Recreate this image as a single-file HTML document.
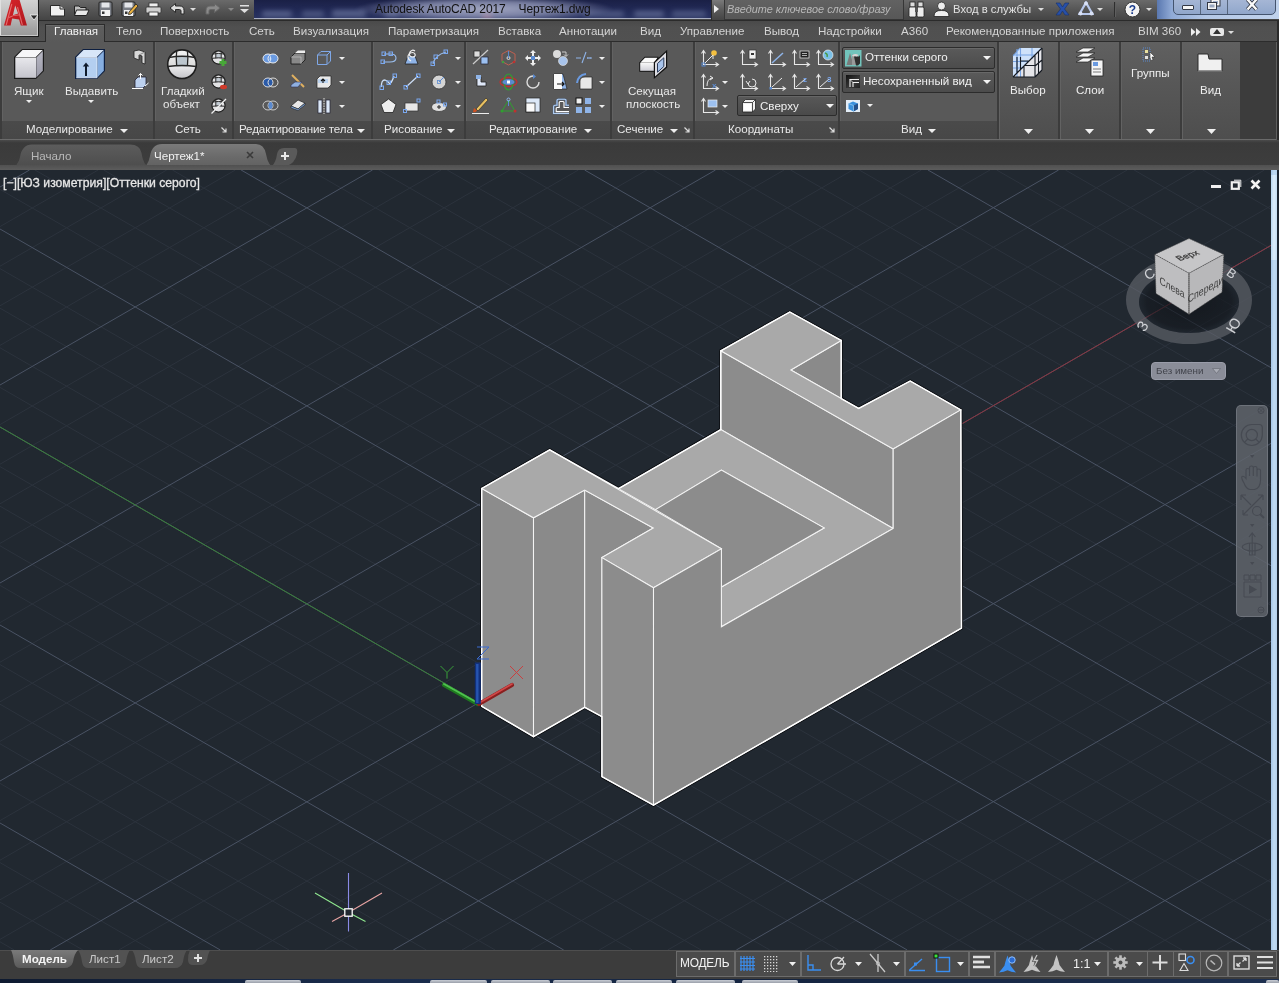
<!DOCTYPE html><html><head><meta charset="utf-8"><style>
*{margin:0;padding:0;box-sizing:border-box}
body{width:1279px;height:983px;overflow:hidden;position:relative;background:#3b3b3b;font-family:"Liberation Sans", sans-serif;font-size:12px;color:#ddd}
.a{position:absolute}
svg{will-change:transform}
.t{position:absolute;white-space:nowrap;line-height:1;will-change:transform}
</style></head><body>
<div class="a" style="left:0;top:0;width:1279px;height:21px;background:linear-gradient(#6a6a6a,#555 50%,#444);border-bottom:1px solid #2b2b2b"></div>
<div class="a" style="left:254px;top:0;width:457px;height:19px;background:linear-gradient(#1a2046,#232b58 60%,#2a3462);overflow:hidden">
<div class="a" style="left:0;top:9px;width:457px;height:10px;filter:blur(2.5px)">
<div class="a" style="left:8px;top:2px;width:30px;height:6px;background:#56608a;border-radius:3px"></div>
<div class="a" style="left:48px;top:2px;width:22px;height:6px;background:#4c5680;border-radius:3px"></div>
<div class="a" style="left:78px;top:1px;width:34px;height:7px;background:#56608a;border-radius:3px"></div>
<div class="a" style="left:130px;top:2px;width:14px;height:6px;background:#505a84;border-radius:3px"></div>
<div class="a" style="left:330px;top:2px;width:40px;height:6px;background:#4e5882;border-radius:3px"></div>
<div class="a" style="left:380px;top:2px;width:30px;height:6px;background:#56608a;border-radius:3px"></div>
<div class="a" style="left:418px;top:2px;width:34px;height:6px;background:#4c5680;border-radius:3px"></div>
<div class="a" style="left:228px;top:3px;width:10px;height:6px;background:#b05060;border-radius:3px"></div>
</div>
<div class="a" style="left:100px;top:-4px;width:260px;height:26px;background:radial-gradient(ellipse 50% 50% at center,rgba(175,180,205,.9) 0%,rgba(150,156,188,.75) 55%,rgba(110,118,165,0) 100%);filter:blur(1px)"></div>
<div class="a" style="left:0;top:17.5px;width:457px;height:1.5px;background:#c0c4d2;opacity:.85"></div>
</div>
<div class="t" style="left:375px;top:3px;font-size:12px;color:#101010;letter-spacing:-0.1px">Autodesk AutoCAD 2017&nbsp;&nbsp;&nbsp;&nbsp;Чертеж1.dwg</div>
<svg class="a" style="left:49px;top:4px" width="17" height="13"><path d="M1.5 1.5 H11 L15.5 5 V12 H1.5 Z" fill="#f0f0f0" stroke="#2a2a2a" stroke-width="1"/><path d="M11 1.5 V5 H15.5" fill="#d8d8d8" stroke="#2a2a2a" stroke-width="1"/></svg>
<svg class="a" style="left:73px;top:4px" width="17" height="13"><path d="M1.5 2 H6 L7.5 3.5 H13 V11.5 H1.5 Z" fill="#bfbfbf" stroke="#222" stroke-width="1"/><path d="M3.5 6 H16 L13.5 11.5 H1.5 Z" fill="#e8e8e8" stroke="#222" stroke-width="1"/></svg>
<svg class="a" style="left:98px;top:1px" width="15" height="16"><rect x="1" y="1" width="13" height="14" rx="1" fill="#7a7e86" stroke="#222"/><rect x="3.5" y="1.5" width="8" height="5" fill="#e4e6ea"/><rect x="3" y="9" width="9" height="6" fill="#f2f2f2"/><rect x="4" y="10.5" width="2.5" height="2.5" fill="#333"/></svg>
<svg class="a" style="left:121px;top:1px" width="18" height="16"><rect x="1" y="1" width="13" height="14" rx="1" fill="#7a7e86" stroke="#222"/><rect x="3.5" y="1.5" width="8" height="5" fill="#e4e6ea"/><rect x="3" y="9" width="9" height="6" fill="#f2f2f2"/><rect x="4" y="10.5" width="2.5" height="2.5" fill="#333"/><path d="M8 11 L15 3 L17 5 L10 13 L7.5 13.5 Z" fill="#e8b040" stroke="#222" stroke-width=".8"/></svg>
<svg class="a" style="left:145px;top:2px" width="17" height="15"><rect x="4" y="1" width="9" height="4" fill="#eee" stroke="#333" stroke-width=".8"/><rect x="1" y="5" width="15" height="6" rx="1" fill="#d0d0d0" stroke="#333" stroke-width=".8"/><rect x="4" y="10" width="9" height="4" fill="#f4f4f4" stroke="#333" stroke-width=".8"/></svg>
<svg class="a" style="left:169px;top:2px" width="16" height="13"><path d="M1 6 L6.5 1.5 V4 H11 Q15 4 15 8.5 V12 H12 V9 Q12 7.5 10.5 7.5 H6.5 V10.5 Z" fill="#dcdcdc" stroke="#2a2a2a" stroke-width="1"/></svg>
<svg class="a" style="left:190px;top:8px" width="6" height="3"><polygon points="0,0 6,0 3.0,3" fill="#dcdcdc"/></svg>
<svg class="a" style="left:205px;top:2px" width="16" height="13"><path d="M15 6 L9.5 1.5 V4 H5 Q1 4 1 8.5 V12 H4 V9 Q4 7.5 5.5 7.5 H9.5 V10.5 Z" fill="#8a8a8a" stroke="#666" stroke-width="1"/></svg>
<svg class="a" style="left:228px;top:8px" width="6" height="3"><polygon points="0,0 6,0 3.0,3" fill="#8a8a8a"/></svg>
<svg class="a" style="left:240px;top:4px" width="10" height="10"><rect x="0" y="1" width="9" height="1.5" fill="#e0e0e0"/><polygon points="0,5 9,5 4.5,9" fill="#e0e0e0"/></svg>
<div class="a" style="left:711px;top:0;width:13px;height:20px;background:linear-gradient(#7a7a7a,#5a5a5a 50%,#444);border-left:1px solid #2a2a2a"></div>
<svg class="a" style="left:714px;top:5px" width="5" height="8"><polygon points="0,0 5,4 0,8" fill="#eee"/></svg>
<div class="a" style="left:724px;top:0;width:180px;height:20px;background:linear-gradient(#626262,#575757);border:1px solid #363636;border-top:none"></div>
<div class="t" style="left:727px;top:3.5px;font-size:10.9px;font-style:italic;color:#b8b8b8">Введите ключевое слово/фразу</div>
<svg class="a" style="left:908px;top:1px" width="18" height="17"><rect x="2" y="1" width="5" height="5" fill="#ddd" stroke="#222" stroke-width=".8"/><rect x="10" y="1" width="5" height="5" fill="#ddd" stroke="#222" stroke-width=".8"/><rect x="1" y="6" width="7" height="10" rx="1.5" fill="#eee" stroke="#222" stroke-width=".8"/><rect x="9" y="6" width="7" height="10" rx="1.5" fill="#eee" stroke="#222" stroke-width=".8"/><rect x="7" y="7" width="3" height="4" fill="#555"/></svg>
<svg class="a" style="left:933px;top:1px" width="17" height="16"><circle cx="8.5" cy="5" r="4" fill="#eee" stroke="#222" stroke-width=".8"/><path d="M1 15.5 Q1 9 8.5 9.5 Q16 9 16 15.5 Z" fill="#eee" stroke="#222" stroke-width=".8"/></svg>
<div class="t" style="left:953px;top:3.5px;font-size:11.3px;color:#e2e2e2">Вход в службы</div>
<svg class="a" style="left:1038px;top:8px" width="6" height="3"><polygon points="0,0 6,0 3.0,3" fill="#ddd"/></svg>
<svg class="a" style="left:1055px;top:2px" width="15" height="14"><path d="M1 1 H5 L7.5 5 L10 1 H14 L9.5 7 L14 13 H10 L7.5 9 L5 13 H1 L5.5 7 Z" fill="#2850a8" stroke="#16306c" stroke-width=".6"/></svg>
<svg class="a" style="left:1078px;top:1px" width="16" height="15"><path d="M8 1.5 L14.5 13 H1.5 Z" fill="none" stroke="#b8c8ec" stroke-width="2.2"/><circle cx="8" cy="2.5" r="2" fill="#d8e0f4"/><circle cx="2.5" cy="12.5" r="2" fill="#d8e0f4"/><circle cx="13.5" cy="12.5" r="2" fill="#d8e0f4"/></svg>
<svg class="a" style="left:1097px;top:8px" width="6" height="3"><polygon points="0,0 6,0 3.0,3" fill="#ddd"/></svg>
<div class="a" style="left:1114px;top:2px;width:1px;height:15px;background:#2e2e2e"></div><div class="a" style="left:1115px;top:2px;width:1px;height:15px;background:#5e5e5e"></div>
<svg class="a" style="left:1124px;top:1px" width="17" height="17"><circle cx="8.5" cy="8.5" r="7.5" fill="#f4f4f4" stroke="#333" stroke-width="1"/><text x="8.5" y="13" font-family="Liberation Sans" font-weight="bold" font-size="12" text-anchor="middle" fill="#1a3c8c">?</text></svg>
<svg class="a" style="left:1146px;top:8px" width="6" height="3"><polygon points="0,0 6,0 3.0,3" fill="#ddd"/></svg>
<div class="a" style="left:1157px;top:0;width:122px;height:19px;background:linear-gradient(90deg,#5a78b0,#90aad6 12%,#b4c8e6 40%,#c0d2ec)"></div>
<div class="a" style="left:1173px;top:-3px;width:103px;height:17.5px;border:1px solid #44546e;border-radius:0 0 5px 5px;background:linear-gradient(#a8b8d6,#9aaed0 60%,#90a6ca)"></div>
<div class="a" style="left:1200px;top:0;width:1px;height:14px;background:#56667e"></div><div class="a" style="left:1227px;top:0;width:1px;height:14px;background:#56667e"></div>
<div class="a" style="left:1182px;top:5px;width:12px;height:5px;background:#f6f6f6;border:1px solid #333844;border-radius:1px"></div>
<svg class="a" style="left:1206px;top:0" width="16" height="11"><rect x="5" y="-1" width="9" height="7" fill="#f4f4f4" stroke="#333844" stroke-width="1"/><rect x="7" y="1" width="5" height="3" fill="#a0b0cc"/><rect x="1.5" y="2.5" width="9" height="7" fill="#f4f4f4" stroke="#333844" stroke-width="1"/><rect x="3.5" y="4.5" width="5" height="3" fill="#9aa8c0"/></svg>
<svg class="a" style="left:1245px;top:0" width="14" height="11"><path d="M2.5 -0.5 L11.5 9.5 M11.5 -0.5 L2.5 9.5" stroke="#2e3440" stroke-width="4"/><path d="M2.5 -0.5 L11.5 9.5 M11.5 -0.5 L2.5 9.5" stroke="#fafafa" stroke-width="2.4"/></svg>
<div class="a" style="left:0;top:21px;width:1279px;height:21px;background:linear-gradient(#4a4a4a,#505050 30%,#515151)"></div><div class="a" style="left:0;top:41px;width:1279px;height:1px;background:#2c2c2c"></div>
<div class="a" style="left:45px;top:24px;width:60px;height:19px;background:linear-gradient(#5e5e5e,#595959);border:1px solid #2c2c2c;border-bottom:none;box-shadow:inset 0 1px 0 #6a6a6a"></div>
<div class="t" style="left:54px;top:24.6px;font-size:11.6px;color:#f2f2f2">Главная</div>
<div class="t" style="left:115.5px;top:24.6px;font-size:11.6px;color:#d4d4d4">Тело</div>
<div class="t" style="left:160px;top:24.6px;font-size:11.6px;color:#d4d4d4">Поверхность</div>
<div class="t" style="left:248.75px;top:24.6px;font-size:11.6px;color:#d4d4d4">Сеть</div>
<div class="t" style="left:293px;top:24.6px;font-size:11.6px;color:#d4d4d4">Визуализация</div>
<div class="t" style="left:387.5px;top:24.6px;font-size:11.6px;color:#d4d4d4">Параметризация</div>
<div class="t" style="left:498.25px;top:24.6px;font-size:11.6px;color:#d4d4d4">Вставка</div>
<div class="t" style="left:559.25px;top:24.6px;font-size:11.6px;color:#d4d4d4">Аннотации</div>
<div class="t" style="left:639.5px;top:24.6px;font-size:11.6px;color:#d4d4d4">Вид</div>
<div class="t" style="left:679.5px;top:24.6px;font-size:11.6px;color:#d4d4d4">Управление</div>
<div class="t" style="left:763.75px;top:24.6px;font-size:11.6px;color:#d4d4d4">Вывод</div>
<div class="t" style="left:817.5px;top:24.6px;font-size:11.6px;color:#d4d4d4">Надстройки</div>
<div class="t" style="left:901.25px;top:24.6px;font-size:11.6px;color:#d4d4d4">A360</div>
<div class="t" style="left:946.25px;top:24.6px;font-size:11.6px;color:#d4d4d4">Рекомендованные приложения</div>
<div class="t" style="left:1138px;top:24.6px;font-size:11.6px;color:#d4d4d4">BIM 360</div>
<svg class="a" style="left:1191px;top:28px" width="10" height="8"><polygon points="0,0 4.5,4 0,8" fill="#eee"/><polygon points="5,0 9.5,4 5,8" fill="#eee"/></svg>
<div class="a" style="left:1210px;top:28px;width:14px;height:8px;background:#e8e8e8;border-radius:2px"></div>
<svg class="a" style="left:1213px;top:29px" width="8" height="5"><polygon points="0,5 8,5 4,0" fill="#333"/></svg>
<svg class="a" style="left:1228px;top:31px" width="6" height="3"><polygon points="0,0 6,0 3.0,3" fill="#ddd"/></svg>
<div class="a" style="left:0;top:42px;width:1279px;height:98px;background:#3c3c3c"></div>
<div class="a" style="left:0;top:139px;width:1279px;height:1px;background:#6a6a6a"></div>
<div class="a" style="left:2px;top:42px;width:151px;height:97px;background:#595959;border-left:1px solid #626262"></div>
<div class="a" style="left:2px;top:121px;width:151px;height:18px;background:linear-gradient(#4a4a4a,#474747)"></div>
<div class="t" style="left:26px;top:123px;font-size:11.6px;color:#e8e8e8;">Моделирование</div>
<svg class="a" style="left:120px;top:129px" width="8" height="4"><polygon points="0,0 8,0 4.0,4" fill="#eeeeee"/></svg>
<div class="a" style="left:155px;top:42px;width:77px;height:97px;background:#595959;border-left:1px solid #626262"></div>
<div class="a" style="left:155px;top:121px;width:77px;height:18px;background:linear-gradient(#4a4a4a,#474747)"></div>
<div class="t" style="left:175px;top:123px;font-size:11.6px;color:#e8e8e8;">Сеть</div>
<svg class="a" style="left:221px;top:127px" width="6" height="6"><path d="M0.5 0.5 L5 5 M5 1.5 V5 H1.5" stroke="#ddd" stroke-width="1.2" fill="none"/></svg>
<div class="a" style="left:234px;top:42px;width:137px;height:97px;background:#595959;border-left:1px solid #626262"></div>
<div class="a" style="left:234px;top:121px;width:137px;height:18px;background:linear-gradient(#4a4a4a,#474747)"></div>
<div class="t" style="left:239px;top:123px;font-size:11.6px;color:#e8e8e8;letter-spacing:-0.12px">Редактирование тела</div>
<svg class="a" style="left:357px;top:129px" width="8" height="4"><polygon points="0,0 8,0 4.0,4" fill="#eeeeee"/></svg>
<div class="a" style="left:373px;top:42px;width:91px;height:97px;background:#595959;border-left:1px solid #626262"></div>
<div class="a" style="left:373px;top:121px;width:91px;height:18px;background:linear-gradient(#4a4a4a,#474747)"></div>
<div class="t" style="left:384px;top:123px;font-size:11.6px;color:#e8e8e8;">Рисование</div>
<svg class="a" style="left:447px;top:129px" width="8" height="4"><polygon points="0,0 8,0 4.0,4" fill="#eeeeee"/></svg>
<div class="a" style="left:466px;top:42px;width:144px;height:97px;background:#595959;border-left:1px solid #626262"></div>
<div class="a" style="left:466px;top:121px;width:144px;height:18px;background:linear-gradient(#4a4a4a,#474747)"></div>
<div class="t" style="left:488.5px;top:123px;font-size:11.6px;color:#e8e8e8;">Редактирование</div>
<svg class="a" style="left:584px;top:129px" width="8" height="4"><polygon points="0,0 8,0 4.0,4" fill="#eeeeee"/></svg>
<div class="a" style="left:612px;top:42px;width:81px;height:97px;background:#595959;border-left:1px solid #626262"></div>
<div class="a" style="left:612px;top:121px;width:81px;height:18px;background:linear-gradient(#4a4a4a,#474747)"></div>
<div class="t" style="left:617px;top:123px;font-size:11.6px;color:#e8e8e8;">Сечение</div>
<svg class="a" style="left:670px;top:129px" width="8" height="4"><polygon points="0,0 8,0 4.0,4" fill="#eeeeee"/></svg>
<svg class="a" style="left:684px;top:127px" width="6" height="6"><path d="M0.5 0.5 L5 5 M5 1.5 V5 H1.5" stroke="#ddd" stroke-width="1.2" fill="none"/></svg>
<div class="a" style="left:695px;top:42px;width:143px;height:97px;background:#595959;border-left:1px solid #626262"></div>
<div class="a" style="left:695px;top:121px;width:143px;height:18px;background:linear-gradient(#4a4a4a,#474747)"></div>
<div class="t" style="left:728px;top:123px;font-size:11.6px;color:#e8e8e8;">Координаты</div>
<svg class="a" style="left:829px;top:127px" width="6" height="6"><path d="M0.5 0.5 L5 5 M5 1.5 V5 H1.5" stroke="#ddd" stroke-width="1.2" fill="none"/></svg>
<div class="a" style="left:840px;top:42px;width:157px;height:97px;background:#595959;border-left:1px solid #626262"></div>
<div class="a" style="left:840px;top:121px;width:157px;height:18px;background:linear-gradient(#4a4a4a,#474747)"></div>
<div class="t" style="left:901px;top:123px;font-size:11.6px;color:#e8e8e8;">Вид</div>
<svg class="a" style="left:928px;top:129px" width="8" height="4"><polygon points="0,0 8,0 4.0,4" fill="#eeeeee"/></svg>
<div class="a" style="left:999px;top:42px;width:59px;height:97px;background:linear-gradient(#606060,#585858 40%,#4e4e4e);box-shadow:inset 1px 0 0 #626262;"></div>
<svg class="a" style="left:1024px;top:129px" width="9" height="5"><polygon points="0,0 9,0 4.5,5" fill="#f0f0f0"/></svg>
<div class="a" style="left:1060px;top:42px;width:59px;height:97px;background:linear-gradient(#606060,#585858 40%,#4e4e4e);box-shadow:inset 1px 0 0 #626262;"></div>
<svg class="a" style="left:1085px;top:129px" width="9" height="5"><polygon points="0,0 9,0 4.5,5" fill="#f0f0f0"/></svg>
<div class="a" style="left:1121px;top:42px;width:59px;height:97px;background:linear-gradient(#606060,#585858 40%,#4e4e4e);box-shadow:inset 1px 0 0 #626262;"></div>
<svg class="a" style="left:1146px;top:129px" width="9" height="5"><polygon points="0,0 9,0 4.5,5" fill="#f0f0f0"/></svg>
<div class="a" style="left:1182px;top:42px;width:58px;height:97px;background:linear-gradient(#606060,#585858 40%,#4e4e4e);box-shadow:inset 1px 0 0 #626262;"></div>
<svg class="a" style="left:1207px;top:129px" width="9" height="5"><polygon points="0,0 9,0 4.5,5" fill="#f0f0f0"/></svg>
<div class="a" style="left:1277px;top:21px;width:2px;height:119px;background:#2a2a2a"></div><div class="a" style="left:1276px;top:42px;width:1px;height:98px;background:#5e5e5e"></div>
<svg class="a" style="left:13px;top:48px" width="32" height="32" viewBox="0 0 32 32"><defs><linearGradient id="bx" x1="0" y1="0" x2="0" y2="1"><stop offset="0" stop-color="#e8e8ec"/><stop offset="1" stop-color="#c4c4cc"/></linearGradient><linearGradient id="bxs" x1="0" y1="0" x2="0" y2="1"><stop offset="0" stop-color="#b8b8c4"/><stop offset="1" stop-color="#9a9aa8"/></linearGradient></defs><path d="M1 9 L9 1 H31 V23 L23 31 H1 Z" fill="#1a1a1a"/><path d="M2.3 9.3 L9.5 2 H29.8 L22.6 9.3 Z" fill="#f6f6f8"/><path d="M2.3 9.6 H23 V29.8 H2.3 Z" fill="url(#bx)"/><path d="M23.3 9.5 L29.8 3 V22.7 L23.3 29.5 Z" fill="url(#bxs)"/></svg>
<svg class="a" style="left:74px;top:48px" width="32" height="32" viewBox="0 0 32 32"><path d="M1 9 L9 1 H31 V23 L23 31 H1 Z" fill="#0c1e40"/><path d="M2.3 9.3 L9.5 2 H29.8 L22.6 9.3 Z" fill="#d8e6f8"/><path d="M2.3 9.6 H23 V29.8 H2.3 Z" fill="#b4cff0"/><path d="M23.3 9.5 L29.8 3 V22.7 L23.3 29.5 Z" fill="#86aee0"/><path d="M12 28 V18" stroke="#0e1a2c" stroke-width="2"/><path d="M8.8 18.5 L12 14.5 L15.2 18.5 Z" fill="#0e1a2c"/><path d="M2.3 29.8 H23 M23 9.6 V29.8 M2.3 9.6 H23" stroke="#f0f6ff" stroke-width=".7" fill="none"/></svg>
<div class="t" style="left:14px;top:85px;font-size:11.6px;color:#e8e8e8;">Ящик</div>
<svg class="a" style="left:26px;top:100px" width="6" height="3"><polygon points="0,0 6,0 3.0,3" fill="#eee"/></svg>
<div class="t" style="left:65px;top:85px;font-size:11.6px;color:#e8e8e8;">Выдавить</div>
<svg class="a" style="left:88px;top:100px" width="6" height="3"><polygon points="0,0 6,0 3.0,3" fill="#eee"/></svg>
<svg class="a" style="left:133px;top:49px" width="14" height="16" viewBox="0 0 14 16"><path d="M1 2 L6 1 L12 3 L12 15 L9 14 V7 L6 6 V11 L1 9 Z" fill="#d8d8d8" stroke="#222" stroke-width=".8"/><path d="M6 6 L12 3" stroke="#888"/></svg>
<svg class="a" style="left:132px;top:73px" width="17" height="17" viewBox="0 0 17 17"><path d="M3 7 L6 4 H14 V12 L11 15 H3 Z" fill="#bcd0ee" stroke="#223" stroke-width=".8"/><path d="M8.5 6 V0.5 M6.5 2.5 L8.5 0.5 L10.5 2.5" stroke="#fff" stroke-width="1" fill="none"/><path d="M0 15.5 H11 M13 13 L16.5 10" stroke="#fff" stroke-width="1"/></svg>
<svg class="a" style="left:166px;top:48px" width="32" height="32" viewBox="0 0 32 32"><defs><linearGradient id="sp" x1="0" y1="0" x2="0" y2="1"><stop offset="0" stop-color="#f4f4f4"/><stop offset=".55" stop-color="#dcdcdc"/><stop offset=".6" stop-color="#e8e8ea"/><stop offset="1" stop-color="#c4c4c8"/></linearGradient></defs><circle cx="16" cy="16.2" r="14.3" fill="url(#sp)" stroke="#1e1e1e" stroke-width="1.6"/><rect x="10.7" y="8.8" width="10.7" height="9.6" fill="#bcc6ce"/><path d="M3 9.5 Q16 7 29 9.5 M2 18.5 Q16 16.5 30 18.5 M10.7 2.5 Q9.8 10 10.7 18.4 M21.4 2.5 Q22.3 10 21.4 18.4" stroke="#262626" stroke-width="1.3" fill="none"/></svg>
<div class="t" style="left:161px;top:85px;font-size:11.6px;color:#e8e8e8;">Гладкий</div>
<div class="t" style="left:163px;top:98px;font-size:11.6px;color:#e8e8e8;">объект</div>
<svg class="a" style="left:211px;top:50px" width="16" height="16" viewBox="0 0 16 16"><circle cx="7.5" cy="7.5" r="6.6" fill="#e2e2e4" stroke="#1e1e1e" stroke-width="1.2"/><rect x="4.8" y="3.8" width="5.4" height="4.4" fill="#c0c8d0"/><path d="M1.5 4 Q7.5 3 13.5 4 M1 8.3 Q7.5 7.3 14 8.3 M4.8 1.2 V8.3 M10.2 1.2 V8.3" stroke="#2a2a2a" stroke-width="1" fill="none"/><path d="M10.5 9 H13.5 V11 H15.5 V14 H13.5 V16 H10.5 V14 H8.5 V11 H10.5 Z" fill="#48a838"/></svg>
<svg class="a" style="left:211px;top:74px" width="16" height="16" viewBox="0 0 16 16"><circle cx="7.5" cy="7.5" r="6.6" fill="#e2e2e4" stroke="#1e1e1e" stroke-width="1.2"/><rect x="4.8" y="3.8" width="5.4" height="4.4" fill="#c0c8d0"/><path d="M1.5 4 Q7.5 3 13.5 4 M1 8.3 Q7.5 7.3 14 8.3 M4.8 1.2 V8.3 M10.2 1.2 V8.3" stroke="#2a2a2a" stroke-width="1" fill="none"/><ellipse cx="12.5" cy="13" rx="3.5" ry="2.2" fill="#d03a2a"/></svg>
<svg class="a" style="left:211px;top:98px" width="16" height="16" viewBox="0 0 16 16"><circle cx="7.5" cy="7.5" r="6.6" fill="#e2e2e4" stroke="#1e1e1e" stroke-width="1.2"/><rect x="4.8" y="3.8" width="5.4" height="4.4" fill="#c0c8d0"/><path d="M1.5 4 Q7.5 3 13.5 4 M1 8.3 Q7.5 7.3 14 8.3 M4.8 1.2 V8.3 M10.2 1.2 V8.3" stroke="#2a2a2a" stroke-width="1" fill="none"/><path d="M0.5 15.5 L15 1" stroke="#f0f0f0" stroke-width="1.2"/></svg>
<svg class="a" style="left:262px;top:53px" width="17" height="11" viewBox="0 0 17 11"><ellipse cx="6" cy="5.5" rx="5" ry="4.5" fill="#6a9ae0" stroke="#eee" stroke-width="1"/><ellipse cx="11" cy="5.5" rx="5" ry="4.5" fill="#6a9ae0" stroke="#eee" stroke-width="1"/><path d="M8.5 2 Q10 5.5 8.5 9 Q7 5.5 8.5 2" fill="#cfe0f8"/></svg>
<svg class="a" style="left:262px;top:77px" width="17" height="11" viewBox="0 0 17 11"><ellipse cx="6" cy="5.5" rx="5" ry="4.5" fill="#2a5aa8" stroke="#ddd" stroke-width="1"/><ellipse cx="11" cy="5.5" rx="5" ry="4.5" fill="none" stroke="#ddd" stroke-width="1"/></svg>
<svg class="a" style="left:262px;top:100px" width="17" height="11" viewBox="0 0 17 11"><ellipse cx="6" cy="5.5" rx="5" ry="4.5" fill="none" stroke="#ccc" stroke-width="1"/><ellipse cx="11" cy="5.5" rx="5" ry="4.5" fill="none" stroke="#ccc" stroke-width="1"/><ellipse cx="8.5" cy="5.5" rx="2" ry="3.5" fill="#5a8ad0"/></svg>
<svg class="a" style="left:290px;top:50px" width="16" height="15" viewBox="0 0 16 15"><path d="M1 7 L5 3 H15 V10 L11 14 H1 Z" fill="#888" stroke="#111" stroke-width=".8"/><path d="M5 3 L8 0.5 H15 V3" fill="#eee"/><path d="M1 7 H11 V14" fill="none" stroke="#ccc" stroke-width=".6"/></svg>
<svg class="a" style="left:290px;top:74px" width="16" height="16" viewBox="0 0 16 16"><path d="M2 1 L14 13" stroke="#e0b060" stroke-width="2"/><path d="M1 11 L5 8 H12 L8 13 H1 Z" fill="#8fb0e0" stroke="#335" stroke-width=".6"/></svg>
<svg class="a" style="left:290px;top:99px" width="16" height="12" viewBox="0 0 16 12"><path d="M1 7 L8 1 L15 4 L8 10 Z" fill="#e8e8e8" stroke="#222" stroke-width=".7"/><path d="M1 7 V9 L8 11.5 L15 6 V4 L8 10 Z" fill="#7fa8e0" stroke="#222" stroke-width=".6"/></svg>
<svg class="a" style="left:316px;top:50px" width="16" height="16" viewBox="0 0 16 16"><path d="M1.5 5 L5 1.5 H14.5 V11 L11 14.5 H1.5 Z M1.5 5 H11 V14.5 M11 5 L14.5 1.5" fill="none" stroke="#7fa8e8" stroke-width="1"/></svg>
<svg class="a" style="left:316px;top:74px" width="16" height="16" viewBox="0 0 16 16"><path d="M1 5 L4 2 H15 V11 L12 14 H1 Z" fill="#e8e8e8" stroke="#222" stroke-width=".7"/><rect x="2" y="5" width="10" height="4" fill="#bcd4f0"/><path d="M7 9 V5.5 M5 7 L7 5 L9 7" stroke="#111" stroke-width="1.1" fill="none"/></svg>
<svg class="a" style="left:316px;top:98px" width="16" height="16" viewBox="0 0 16 16"><rect x="2" y="2" width="4" height="13" fill="#dce8f8" stroke="#223" stroke-width=".7"/><rect x="10" y="2" width="4" height="13" fill="#dce8f8" stroke="#223" stroke-width=".7"/><path d="M8 0 V16" stroke="#ddd" stroke-dasharray="1.5 1"/></svg>
<svg class="a" style="left:339px;top:57px" width="6" height="3"><polygon points="0,0 6,0 3.0,3" fill="#eee"/></svg>
<svg class="a" style="left:339px;top:81px" width="6" height="3"><polygon points="0,0 6,0 3.0,3" fill="#eee"/></svg>
<svg class="a" style="left:339px;top:105px" width="6" height="3"><polygon points="0,0 6,0 3.0,3" fill="#eee"/></svg>
<svg class="a" style="left:380px;top:51px" width="18" height="14" viewBox="0 0 18 14"><path d="M3 11 H10 Q16 11 16 7 Q16 3 10 3 H4" fill="none" stroke="#9cc0f0" stroke-width="1.1"/><rect x="1" y="9" width="3.5" height="3.5" fill="none" stroke="#7aa8f0"/><rect x="9" y="1" width="3.5" height="3.5" fill="none" stroke="#7aa8f0"/><rect x="2" y="1" width="3.5" height="3.5" fill="none" stroke="#7aa8f0"/></svg>
<svg class="a" style="left:403px;top:49px" width="17" height="17" viewBox="0 0 17 17"><path d="M2 15 L5 7 H12 L15 15 Z" fill="#8fb4e8" stroke="#222" stroke-width=".8"/><path d="M8 12 Q3 9 6 5 Q10 2 12 5 Q13 8 9 8 Q5 7 7 3 Q9 0 12 2" fill="none" stroke="#f0f0f0" stroke-width="1.2"/></svg>
<svg class="a" style="left:430px;top:49px" width="19" height="18" viewBox="0 0 19 18"><path d="M3 15 Q5 6 16 3" fill="none" stroke="#9cc0f0" stroke-width="1.1"/><rect x="1" y="13" width="3.5" height="3.5" fill="none" stroke="#7aa8f0"/><rect x="4" y="6" width="3.5" height="3.5" fill="none" stroke="#7aa8f0"/><rect x="14" y="1" width="3.5" height="3.5" fill="none" stroke="#7aa8f0"/></svg>
<svg class="a" style="left:379px;top:73px" width="18" height="17" viewBox="0 0 18 17"><path d="M2.5 14 Q2 7 6 7 Q9 8 10 10 Q12 12 15 3" fill="none" stroke="#cfe0f8" stroke-width="1.3"/><rect x="1" y="13" width="3.5" height="3.5" fill="none" stroke="#7aa8f0"/><rect x="8" y="8" width="3.5" height="3.5" fill="none" stroke="#7aa8f0"/><rect x="14" y="1" width="3.5" height="3.5" fill="none" stroke="#7aa8f0"/></svg>
<svg class="a" style="left:403px;top:73px" width="18" height="17" viewBox="0 0 18 17"><path d="M3 14 L15 3" stroke="#cfe0f8" stroke-width="1.2"/><rect x="1" y="12.5" width="3.5" height="3.5" fill="none" stroke="#7aa8f0"/><rect x="13.5" y="1" width="3.5" height="3.5" fill="none" stroke="#7aa8f0"/></svg>
<svg class="a" style="left:431px;top:74px" width="16" height="16" viewBox="0 0 16 16"><circle cx="8" cy="8" r="7" fill="#d4d4d4" stroke="#333" stroke-width=".8"/><path d="M8 8 L13 3" stroke="#5a8ad0"/><rect x="6.5" y="6.5" width="3" height="3" fill="none" stroke="#5a8ad0" stroke-width=".8"/></svg>
<svg class="a" style="left:380px;top:98px" width="17" height="15" viewBox="0 0 17 15"><path d="M8.5 1 L16 6.5 L13 14.5 H4 L1 6.5 Z" fill="#eeeeee" stroke="#222" stroke-width=".8"/></svg>
<svg class="a" style="left:403px;top:98px" width="18" height="15" viewBox="0 0 18 15"><rect x="2" y="5" width="13" height="8" fill="#e8e8e8" stroke="#333" stroke-width=".7"/><rect x="0.5" y="11.5" width="3" height="3" fill="none" stroke="#7aa8f0"/><rect x="14" y="1" width="3" height="3" fill="none" stroke="#7aa8f0"/></svg>
<svg class="a" style="left:431px;top:99px" width="17" height="14" viewBox="0 0 17 14"><ellipse cx="8" cy="8" rx="7.5" ry="4.5" fill="#e0e0e0" stroke="#333" stroke-width=".7"/><path d="M8 6 V10 M6 8 H10" stroke="#222"/><rect x="6" y="1" width="3" height="3" fill="none" stroke="#7aa8f0"/><rect x="12.5" y="4" width="3" height="3" fill="none" stroke="#7aa8f0"/></svg>
<svg class="a" style="left:455px;top:57px" width="6" height="3"><polygon points="0,0 6,0 3.0,3" fill="#eee"/></svg>
<svg class="a" style="left:455px;top:81px" width="6" height="3"><polygon points="0,0 6,0 3.0,3" fill="#eee"/></svg>
<svg class="a" style="left:455px;top:105px" width="6" height="3"><polygon points="0,0 6,0 3.0,3" fill="#eee"/></svg>
<svg class="a" style="left:472px;top:49px" width="18" height="17" viewBox="0 0 18 17"><rect x="2" y="2" width="6" height="6" fill="#ddd" stroke="#222" stroke-width=".7"/><path d="M1 15 L16 1" stroke="#ccc" stroke-width="1.2"/><rect x="9" y="8" width="7" height="7" fill="#9cc0f0" stroke="#223" stroke-width=".7"/></svg>
<svg class="a" style="left:500px;top:49px" width="17" height="18" viewBox="0 0 17 18"><path d="M8.5 1.5 L15 5 V12.5 L8.5 16 L2 12.5 V5 Z" fill="none" stroke="#c06050" stroke-width="1"/><circle cx="8.5" cy="9" r="1.5" fill="none" stroke="#ddd"/><path d="M8.5 2 V9" stroke="#5a8ad0"/><circle cx="3" cy="13" r="1.3" fill="#40a040"/><circle cx="14" cy="13" r="1.3" fill="#c03030"/></svg>
<svg class="a" style="left:524px;top:49px" width="18" height="18" viewBox="0 0 18 18"><path d="M9 1 L12 4 H10 V8 H14 V6 L17 9 L14 12 V10 H10 V14 H12 L9 17 L6 14 H8 V10 H4 V12 L1 9 L4 6 V8 H8 V4 H6 Z" fill="#eee"/><rect x="7" y="7" width="4" height="4" fill="#5a8ad0"/></svg>
<svg class="a" style="left:552px;top:49px" width="17" height="18" viewBox="0 0 17 18"><circle cx="5" cy="5" r="4" fill="#ddd"/><circle cx="11" cy="12" r="4.5" fill="#a8c4ec" stroke="#ddd" stroke-width=".7"/><path d="M10 3 H14 V7 M12 5.5 L14 7.5 L16 5.5" fill="none" stroke="#ccc"/></svg>
<svg class="a" style="left:575px;top:51px" width="18" height="13" viewBox="0 0 18 13"><path d="M1 7 H6 M12 7 H17" stroke="#8fb4e8" stroke-width="1.1"/><path d="M7 12 L11 1" stroke="#8fb4e8" stroke-width="1.1"/><path d="M12 7 H17" stroke="#8fb4e8" stroke-dasharray="1.5 1"/></svg>
<svg class="a" style="left:474px;top:74px" width="14" height="15" viewBox="0 0 14 15"><path d="M3 3 V12 H12 V8 H7 V3 Z" fill="#dfe8f8" stroke="#222" stroke-width=".8"/><rect x="2" y="1" width="5" height="4" fill="#8fb4e8"/></svg>
<svg class="a" style="left:499px;top:73px" width="19" height="18" viewBox="0 0 19 18"><ellipse cx="9.5" cy="9" rx="8.5" ry="4.5" fill="none" stroke="#c03030" stroke-width="1.3"/><ellipse cx="9.5" cy="9" rx="4.5" ry="8" fill="none" stroke="#30a030" stroke-width="1.2"/><ellipse cx="9.5" cy="9" rx="6" ry="3" fill="#5a8ad0"/><rect x="8" y="7.5" width="3" height="3" fill="#fff"/></svg>
<svg class="a" style="left:525px;top:74px" width="16" height="16" viewBox="0 0 16 16"><path d="M8 2 A6 6 0 1 0 14 8" fill="none" stroke="#ddd" stroke-width="1.4"/><path d="M8 0 L11 2.5 L8 5 Z" fill="#5a8ad0"/></svg>
<svg class="a" style="left:552px;top:73px" width="17" height="18" viewBox="0 0 17 18"><path d="M2 1 H11 L15 16 H2 Z" fill="#8fb4e8" stroke="#222" stroke-width=".7"/><path d="M2 1 H10 V16 H2 Z" fill="#fafafa"/><path d="M5 11 H12 M10 9 L12 11 L10 13" stroke="#111" stroke-width="1.2" fill="none"/></svg>
<svg class="a" style="left:576px;top:73px" width="18" height="17" viewBox="0 0 18 17"><path d="M4 16 V8 Q4 4 9 4 H16 V16 Z" fill="#e8e8e8" stroke="#222" stroke-width=".7"/><path d="M1 10 Q2 2 10 1" fill="none" stroke="#6a9ae0" stroke-width="2"/></svg>
<svg class="a" style="left:471px;top:97px" width="19" height="17" viewBox="0 0 19 17"><path d="M5 12 L15 1 L17 3 L7 14 Z" fill="#e8c060" stroke="#222" stroke-width=".6"/><path d="M3 11 L6 13.5 Q5 16 2 15 Z" fill="#d05020"/><path d="M1 16.5 H18" stroke="#eee"/></svg>
<svg class="a" style="left:500px;top:97px" width="17" height="17" viewBox="0 0 17 17"><path d="M8.5 3 L15 14 H2 Z" fill="none" stroke="#30a030" stroke-width="1"/><path d="M8.5 3 V9" stroke="#5a8ad0"/><circle cx="8.5" cy="2.5" r="1.5" fill="none" stroke="#8fb4e8"/><circle cx="15" cy="14" r="1.5" fill="#c03030"/><circle cx="2" cy="14" r="1.5" fill="#30a030"/></svg>
<svg class="a" style="left:525px;top:97px" width="16" height="16" viewBox="0 0 16 16"><rect x="1" y="1" width="14" height="14" fill="#dce8f8" stroke="#222" stroke-width=".7"/><rect x="1" y="6" width="9" height="9" fill="#fafafa" stroke="#222" stroke-width=".7"/></svg>
<svg class="a" style="left:552px;top:97px" width="18" height="18" viewBox="0 0 18 18"><path d="M17 8.3 H14 V3.5 Q14 2.3 12.8 2.3 H6.2 Q5 2.3 5 3.5 V8.3 H3 Q1.6 8.3 1.6 9.8 V16.5 H17" fill="none" stroke="#4a6a98" stroke-width="1.7" opacity=".8"/><path d="M17 8.3 H14 V3.5 Q14 2.3 12.8 2.3 H6.2 Q5 2.3 5 3.5 V8.3 H3 Q1.6 8.3 1.6 9.8 V16.5 H17" fill="none" stroke="#b4d0f4" stroke-width="1.1"/><path d="M17 10.5 H12 V5.5 Q12 4.5 11 4.5 H8.2 Q7.2 4.5 7.2 5.5 V10.5 H5 Q4.2 10.5 4.2 11.5 V14.6 H17" fill="none" stroke="#ffffff" stroke-width="1.1"/></svg>
<svg class="a" style="left:575px;top:97px" width="18" height="17" viewBox="0 0 18 17"><rect x="1" y="1" width="6" height="6" fill="#f0f0f0" stroke="#111" stroke-width="1"/><rect x="10" y="1" width="6" height="6" fill="#8fb4e8"/><rect x="1" y="10" width="6" height="6" fill="#8fb4e8"/><rect x="10" y="10" width="6" height="6" fill="#8fb4e8"/></svg>
<svg class="a" style="left:599px;top:57px" width="6" height="3"><polygon points="0,0 6,0 3.0,3" fill="#eee"/></svg>
<svg class="a" style="left:599px;top:81px" width="6" height="3"><polygon points="0,0 6,0 3.0,3" fill="#eee"/></svg>
<svg class="a" style="left:599px;top:105px" width="6" height="3"><polygon points="0,0 6,0 3.0,3" fill="#eee"/></svg>
<svg class="a" style="left:630px;top:44px" width="40" height="40" viewBox="0 0 40 40"><defs><linearGradient id="sb" x1="0" y1="0" x2="0" y2="1"><stop offset="0" stop-color="#f8f8f8"/><stop offset="1" stop-color="#d0d0d8"/></linearGradient></defs><path d="M9.3 18.5 L14.7 12.8 H28.5 V19 L24.5 27.8 H9.3 Z" fill="#111"/><path d="M10.2 18.8 L15 13.8 H27.5 L24 18.8 Z" fill="#fafafa"/><rect x="10.2" y="19" width="14" height="7.8" fill="url(#sb)"/><path d="M23.8 18.2 L37.2 5.8 V23.4 L23.8 35 Z" fill="#111"/><path d="M25 18.8 L36 8.6 V22.8 L25 32.6 Z" fill="#dcdce2"/><path d="M27.5 19.5 L33.8 13.8 V22.5 L27.5 28.2 Z" fill="#a8c4ec" stroke="#2a3a58" stroke-width="1"/></svg>
<div class="t" style="left:628px;top:85px;font-size:11.6px;color:#e8e8e8;">Секущая</div>
<div class="t" style="left:626px;top:98px;font-size:11.6px;color:#e8e8e8;">плоскость</div>
<svg class="a" style="left:701px;top:49px" width="19" height="19" viewBox="0 0 19 19"><path d="M2.5 16 V2 M0.5 4.5 L2.5 1.5 L4.5 4.5 M2.5 15.5 H17 M14.5 13.5 L17.5 15.5 L14.5 17.5" stroke="#e8e8e8" stroke-width="1.1" fill="none"/><rect x="1" y="14" width="3" height="3" fill="none" stroke="#5a8ad0"/><path d="M4 14 L12 6" stroke="#e8e8e8"/><circle cx="13" cy="4" r="2.8" fill="#f4c040"/><path d="M12 6 V10" stroke="#eee"/></svg>
<svg class="a" style="left:722px;top:57px" width="6" height="3"><polygon points="0,0 6,0 3.0,3" fill="#eee"/></svg>
<svg class="a" style="left:740px;top:49px" width="19" height="19" viewBox="0 0 19 19"><path d="M2.5 16 V2 M0.5 4.5 L2.5 1.5 L4.5 4.5 M2.5 15.5 H17 M14.5 13.5 L17.5 15.5 L14.5 17.5" stroke="#e8e8e8" stroke-width="1.1" fill="none"/><rect x="9" y="1" width="7" height="9" fill="#f0f0f0" stroke="#333" stroke-width=".7"/><rect x="11" y="4" width="3" height="2" fill="#333"/></svg>
<svg class="a" style="left:768px;top:49px" width="19" height="19" viewBox="0 0 19 19"><path d="M2.5 16 V2 M0.5 4.5 L2.5 1.5 L4.5 4.5 M2.5 15.5 H17 M14.5 13.5 L17.5 15.5 L14.5 17.5" stroke="#e8e8e8" stroke-width="1.1" fill="none"/><path d="M4 14 L15 4" stroke="#8fb4e8" stroke-width="1.5"/></svg>
<svg class="a" style="left:792px;top:49px" width="19" height="19" viewBox="0 0 19 19"><path d="M2.5 16 V2 M0.5 4.5 L2.5 1.5 L4.5 4.5 M2.5 15.5 H17 M14.5 13.5 L17.5 15.5 L14.5 17.5" stroke="#e8e8e8" stroke-width="1.1" fill="none"/><rect x="8" y="2" width="9" height="7" fill="#222" stroke="#eee" stroke-width=".7"/><path d="M10 4.5 H15 M10 6.5 H15" stroke="#eee" stroke-width=".7"/></svg>
<svg class="a" style="left:816px;top:49px" width="19" height="19" viewBox="0 0 19 19"><path d="M2.5 16 V2 M0.5 4.5 L2.5 1.5 L4.5 4.5 M2.5 15.5 H17 M14.5 13.5 L17.5 15.5 L14.5 17.5" stroke="#e8e8e8" stroke-width="1.1" fill="none"/><circle cx="12" cy="6" r="5" fill="#7ac0e8" stroke="#eee" stroke-width=".7"/><path d="M9 4 Q12 5 11 8" stroke="#4a9a4a" stroke-width="1.5" fill="none"/></svg>
<svg class="a" style="left:701px;top:73px" width="19" height="19" viewBox="0 0 19 19"><path d="M2.5 16 V2 M0.5 4.5 L2.5 1.5 L4.5 4.5 M2.5 15.5 H17 M14.5 13.5 L17.5 15.5 L14.5 17.5" stroke="#e8e8e8" stroke-width="1.1" fill="none"/><path d="M6 13 Q6 6 11 5" stroke="#e8e8e8" fill="none"/><path d="M9 3 L12 5 L9 7" fill="none" stroke="#eee"/><text x="11" y="15" font-size="8" font-weight="bold" fill="#5a8ad0" font-family="Liberation Sans">x</text></svg>
<svg class="a" style="left:722px;top:81px" width="6" height="3"><polygon points="0,0 6,0 3.0,3" fill="#eee"/></svg>
<svg class="a" style="left:740px;top:73px" width="19" height="19" viewBox="0 0 19 19"><path d="M2.5 16 V2 M0.5 4.5 L2.5 1.5 L4.5 4.5 M2.5 15.5 H17 M14.5 13.5 L17.5 15.5 L14.5 17.5" stroke="#e8e8e8" stroke-width="1.1" fill="none"/><path d="M8 10 A4 4 0 1 0 12 6" fill="none" stroke="#e8e8e8"/><path d="M6 8 L8 11 L10 8" fill="none" stroke="#e8e8e8"/></svg>
<svg class="a" style="left:768px;top:73px" width="19" height="19" viewBox="0 0 19 19"><path d="M2.5 16 V2 M0.5 4.5 L2.5 1.5 L4.5 4.5 M2.5 15.5 H17 M14.5 13.5 L17.5 15.5 L14.5 17.5" stroke="#e8e8e8" stroke-width="1.1" fill="none"/><path d="M4 14 L14 5" stroke="#e8e8e8"/><rect x="1.5" y="14" width="2.5" height="2.5" fill="#5a8ad0"/></svg>
<svg class="a" style="left:792px;top:73px" width="19" height="19" viewBox="0 0 19 19"><path d="M2.5 16 V2 M0.5 4.5 L2.5 1.5 L4.5 4.5 M2.5 15.5 H17 M14.5 13.5 L17.5 15.5 L14.5 17.5" stroke="#e8e8e8" stroke-width="1.1" fill="none"/><path d="M4 14 L13 6" stroke="#e8e8e8"/><text x="11" y="9" font-size="8" font-weight="bold" fill="#7aa8f0" font-family="Liberation Sans">z</text></svg>
<svg class="a" style="left:816px;top:73px" width="19" height="19" viewBox="0 0 19 19"><path d="M2.5 16 V2 M0.5 4.5 L2.5 1.5 L4.5 4.5 M2.5 15.5 H17 M14.5 13.5 L17.5 15.5 L14.5 17.5" stroke="#e8e8e8" stroke-width="1.1" fill="none"/><path d="M4 14 L13 6" stroke="#e8e8e8"/><text x="11" y="9" font-size="8" font-weight="bold" fill="#7aa8f0" font-family="Liberation Sans">3</text></svg>
<svg class="a" style="left:701px;top:97px" width="19" height="19" viewBox="0 0 19 19"><path d="M2.5 16 V2 M0.5 4.5 L2.5 1.5 L4.5 4.5 M2.5 15.5 H17 M14.5 13.5 L17.5 15.5 L14.5 17.5" stroke="#e8e8e8" stroke-width="1.1" fill="none"/><rect x="7" y="3" width="9" height="7" fill="#9cc0f0" stroke="#eee" stroke-width=".7"/></svg>
<svg class="a" style="left:722px;top:105px" width="6" height="3"><polygon points="0,0 6,0 3.0,3" fill="#eee"/></svg>
<div class="a" style="left:737px;top:95px;width:100px;height:21px;background:linear-gradient(#585858,#4a4a4a);border:1px solid #2c2c2c;border-radius:2px;box-shadow:inset 0 1px 0 #666"></div>
<svg class="a" style="left:741px;top:98px" width="16" height="15" viewBox="0 0 16 15"><path d="M1.5 4.5 L4.5 1.5 H14.5 V11 L11.5 14 H1.5 Z" fill="#f0f0f0" stroke="#222" stroke-width=".8"/><path d="M1.5 4.5 H11.5 V14 M11.5 4.5 L14.5 1.5" fill="none" stroke="#222" stroke-width=".8"/><rect x="3" y="6" width="7" height="6.5" fill="#fff"/></svg>
<div class="t" style="left:760px;top:100px;font-size:11.6px;color:#f0f0f0;">Сверху</div>
<svg class="a" style="left:826px;top:104px" width="8" height="4"><polygon points="0,0 8,0 4.0,4" fill="#f4f4f4"/></svg>
<div class="a" style="left:842px;top:47px;width:153px;height:22px;background:linear-gradient(#5a5a5a,#4c4c4c);border:1px solid #2c2c2c;border-radius:2px;box-shadow:inset 0 1px 0 #686868"></div>
<div class="a" style="left:842px;top:71px;width:153px;height:22px;background:linear-gradient(#5a5a5a,#4c4c4c);border:1px solid #2c2c2c;border-radius:2px;box-shadow:inset 0 1px 0 #686868"></div>
<svg class="a" style="left:845px;top:50px" width="17" height="17" viewBox="0 0 17 17"><rect x="0" y="0" width="16.5" height="16.5" fill="#72c4bc"/><path d="M1.5 15 L5 3 L8.5 15 Z" fill="#7a7a7a"/><path d="M7 15 V6 Q7 4 10 4 Q13 4 13 6 V15 Z" fill="#9a9a9a"/><path d="M9 6.5 H14 L15 5 V13.5 L13 15.5 H11 Z" fill="#2e2e2e"/><path d="M7 5.5 Q10 3 13.5 5 L12 6.5 Q10 5.5 8 6.5 Z" fill="#d8d8d8"/></svg>
<div class="t" style="left:865px;top:51px;font-size:11.6px;color:#f0f0f0;">Оттенки серого</div>
<svg class="a" style="left:983px;top:56px" width="8" height="4"><polygon points="0,0 8,0 4.0,4" fill="#f4f4f4"/></svg>
<svg class="a" style="left:846px;top:75px" width="14" height="14" viewBox="0 0 14 14"><defs><linearGradient id="uv" x1="0" y1="0" x2="1" y2="1"><stop offset="0" stop-color="#101010"/><stop offset=".6" stop-color="#3a3a3a"/><stop offset="1" stop-color="#222"/></linearGradient></defs><rect x="0" y="0" width="14" height="13" fill="url(#uv)"/><path d="M4 12 V4.5 H13 M7 12 V7.5 H13" stroke="#f0f0f0" stroke-width="1.1" fill="none"/><path d="M4 4.5 L7 7.5" stroke="#f0f0f0" stroke-width=".8"/></svg>
<div class="t" style="left:863px;top:75px;font-size:11.6px;color:#f0f0f0;">Несохраненный вид</div>
<svg class="a" style="left:983px;top:80px" width="8" height="4"><polygon points="0,0 8,0 4.0,4" fill="#f4f4f4"/></svg>
<svg class="a" style="left:846px;top:100px" width="14" height="12" viewBox="0 0 14 12"><rect x="0" y="0" width="14" height="12" fill="#e4eef8"/><path d="M2.5 3.5 L7 1.5 L12 3.5 V9 L7.5 11.5 L2.5 9 Z" fill="#3a90dc"/><path d="M7.5 5.5 L12 3.5 V9 L7.5 11.5 Z" fill="#24508a"/><path d="M2.5 3.5 L7.5 5.5 V11.5" stroke="#9cd0f4" stroke-width=".7" fill="none"/></svg>
<svg class="a" style="left:867px;top:104px" width="6" height="3"><polygon points="0,0 6,0 3.0,3" fill="#eee"/></svg>
<svg class="a" style="left:1011px;top:46px" width="32" height="32" viewBox="0 0 32 32"><path d="M2 10 L9 2 H31 V24 L24 31 H2 Z" fill="#cfe2fa"/><path d="M2 31 L31 2 V24 L24 31 Z" fill="#e6e6ea"/><path d="M2 9 H24 M2 15.5 H18 M2 22 H12 M6 3 V31 M9.5 2 V31 M21 2 V13 M9 2 L2 10" stroke="#78a4e4" stroke-width="1.1" fill="none"/><path d="M2 31 L31 2 M13 19.5 V31 M13 19.5 H24 M24 9 V31 M27.5 5.5 V27.5 M31 2 V24 M2 31 H24 M24 31 L31 24 M24 20 L31 14 M6 11 V27 M9.5 11 V24 M9.5 15 H18" stroke="#151a22" stroke-width="1.1" fill="none"/></svg>
<div class="t" style="left:1010px;top:84px;font-size:11.6px;color:#eeeeee;">Выбор</div>
<svg class="a" style="left:1075px;top:47px" width="30" height="30" viewBox="0 0 30 30"><path d="M1 5 L8 1 H20 L13 5 Z" fill="#f4f4f4" stroke="#222" stroke-width=".7"/><path d="M1 10 L8 6 H20 L13 10 Z" fill="#f4f4f4" stroke="#222" stroke-width=".7"/><path d="M1 15 L8 11 H20 L13 15 Z" fill="#f4f4f4" stroke="#222" stroke-width=".7"/><rect x="16" y="13" width="12" height="16" fill="#f4f4f4" stroke="#222" stroke-width=".8"/><rect x="18" y="15" width="5" height="4" fill="#6a9ae0"/><path d="M18 22 H26 M18 25 H26" stroke="#444" stroke-width=".7"/></svg>
<div class="t" style="left:1076px;top:84px;font-size:11.6px;color:#eeeeee;">Слои</div>
<svg class="a" style="left:1142px;top:47px" width="14" height="16" viewBox="0 0 14 16"><rect x="1" y="1" width="7" height="13" fill="none" stroke="#5a8ad0" stroke-dasharray="1 1"/><rect x="3" y="3" width="3" height="3" fill="#e8e0a0"/><rect x="3" y="9" width="3" height="3" fill="#e0e0e0"/><path d="M8 5 L13 10 H10 L11 13 L9 13.5 L8 10.5 Z" fill="#fafafa" stroke="#222" stroke-width=".5"/></svg>
<div class="t" style="left:1131px;top:67px;font-size:11.6px;color:#eeeeee;">Группы</div>
<svg class="a" style="left:1197px;top:52px" width="27" height="20" viewBox="0 0 27 20"><path d="M1 2 H11 L12 7 H25 V19 H1 Z" fill="#f0f0f0" stroke="#2a2a2a" stroke-width="1"/><path d="M1 19 H25" stroke="#999"/></svg>
<div class="t" style="left:1200px;top:84px;font-size:11.6px;color:#eeeeee;">Вид</div>
<div class="a" style="left:0;top:0;width:39px;height:37px;background:linear-gradient(#d2d2d2,#bcbcbc 45%,#a2a2a2 80%,#999);border-right:1px solid #1c1c1c;border-bottom:1px solid #1c1c1c;box-shadow:inset -1px -1px 0 #c8c8c8, inset 1px 0 0 #e0e0e0"></div>
<svg class="a" style="left:0;top:0" width="30" height="28" viewBox="0 0 30 28">
<defs><linearGradient id="ar" x1="0" y1="0" x2="1" y2="1"><stop offset="0" stop-color="#d8262c"/><stop offset=".6" stop-color="#c01c22"/><stop offset="1" stop-color="#b0181e"/></linearGradient></defs>
<path fill-rule="evenodd" d="M4 25.5 L11.2 0 H19.6 L27 25.5 H20.8 L19.1 19.4 L12.1 18.6 L10.6 25.5 Z M12.9 15.2 L15.2 5.5 L18.1 13.6 Z" fill="url(#ar)"/>
<path d="M6.2 25 L11.8 4 M22.4 25 L17.5 7 M9 17.5 Q14 14.5 20 15" stroke="#f08080" stroke-width="1.1" fill="none" opacity=".75"/>
</svg>
<svg class="a" style="left:29px;top:14px" width="10" height="7"><polygon points="1,1 9,1 5,6" fill="#2a2a2a" stroke="#f4f4f4" stroke-width=".8"/></svg>
<div class="a" style="left:0;top:140px;width:1279px;height:30px;background:linear-gradient(#3a3a3a,#3e3e3e)"></div>
<div class="a" style="left:0;top:140px;width:1279px;height:3px;background:linear-gradient(#4a4a4a,#3a3a3a)"></div>
<svg class="a" style="left:0;top:140px" width="320" height="30">
<defs><linearGradient id="ft1" x1="0" y1="0" x2="0" y2="1"><stop offset="0" stop-color="#5c5c5c"/><stop offset="1" stop-color="#4c4c4c"/></linearGradient>
<linearGradient id="ft2" x1="0" y1="0" x2="0" y2="1"><stop offset="0" stop-color="#7a7a7a"/><stop offset=".5" stop-color="#6a6a6a"/><stop offset="1" stop-color="#5e5e5e"/></linearGradient></defs>
<path d="M10 28 Q18 27 20 17 Q22 4.5 32 4.5 H130 Q140 4.5 141.5 13 Q143 25 150 28 Z" fill="url(#ft1)"/>
<path d="M140 30 Q148 27 150 16 Q152 4 162 4 H256 Q264 4 266 14 Q268 26 276 30 Z" fill="url(#ft2)"/>
<path d="M272 26 Q276 22 277 14 Q278 8 284 8 H295 Q298 8 297 14 Q295 23 287 26 Z" fill="#5a5a5a"/>
</svg>
<div class="a" style="left:0;top:165px;width:1279px;height:5px;background:linear-gradient(#505050,#5c5c5c)"></div>
<div class="t" style="left:31px;top:150px;font-size:11.6px;color:#b8b8b8;">Начало</div>
<div class="t" style="left:154px;top:150px;font-size:11.6px;color:#f2f2f2;">Чертеж1*</div>
<svg class="a" style="left:246px;top:151px" width="8" height="8" viewBox="0 0 8 8"><path d="M1 1 L7 7 M7 1 L1 7" stroke="#3a3a3a" stroke-width="1.6"/></svg>
<svg class="a" style="left:280px;top:151px" width="10" height="10" viewBox="0 0 10 10"><path d="M5 1 V9 M1 5 H9" stroke="#e8e8e8" stroke-width="2"/></svg>
<div style="position:absolute;left:0;top:170px;width:1271px;height:780px;background:#212830;overflow:hidden">
<svg width="1271" height="780" style="position:absolute;left:0;top:0">
<path d="M1202.8 0.0L1271.0 39.3M1134.1 0.0L1271.0 78.9M1065.4 0.0L1271.0 118.5M996.7 0.0L1271.0 158.1M859.3 0.0L1271.0 237.3M790.6 0.0L1271.0 276.9M721.9 0.0L1271.0 316.5M653.3 0.0L1271.0 356.1M515.9 0.0L1271.0 435.3M447.2 0.0L1271.0 474.9M378.5 0.0L1271.0 514.5M309.8 0.0L1271.0 554.1M172.4 0.0L1271.0 633.3M103.7 0.0L1271.0 672.9M35.0 0.0L1271.0 712.5M0.0 19.4L1271.0 752.1M0.0 98.6L1182.0 780.0M0.0 138.2L1113.3 780.0M0.0 177.8L1044.6 780.0M0.0 217.4L975.9 780.0M0.0 296.6L838.5 780.0M0.0 336.2L769.8 780.0M0.0 375.8L701.1 780.0M0.0 415.4L632.4 780.0M0.0 494.6L495.1 780.0M0.0 534.2L426.4 780.0M0.0 573.8L357.7 780.0M0.0 613.4L289.0 780.0M0.0 692.6L151.6 780.0M0.0 732.2L82.9 780.0M0.0 771.8L14.2 780.0M0.0 56.6L98.1 0.0M0.0 96.2L166.7 0.0M0.0 135.8L235.3 0.0M0.0 175.4L303.9 0.0M0.0 254.6L441.1 0.0M0.0 294.2L509.7 0.0M0.0 333.8L578.3 0.0M0.0 373.4L646.9 0.0M0.0 452.6L784.1 0.0M0.0 492.2L852.7 0.0M0.0 531.8L921.3 0.0M0.0 571.4L990.0 0.0M0.0 650.6L1127.2 0.0M0.0 690.2L1195.8 0.0M0.0 729.8L1264.4 0.0M0.0 769.4L1271.0 35.8M118.8 780.0L1271.0 115.0M187.5 780.0L1271.0 154.6M256.1 780.0L1271.0 194.2M324.7 780.0L1271.0 233.8M461.9 780.0L1271.0 313.0M530.5 780.0L1271.0 352.6M599.1 780.0L1271.0 392.2M667.7 780.0L1271.0 431.8M804.9 780.0L1271.0 511.0M873.5 780.0L1271.0 550.6M942.1 780.0L1271.0 590.2M1010.7 780.0L1271.0 629.8M1148.0 780.0L1271.0 709.0M1216.6 780.0L1271.0 748.6" stroke="#2c333d" stroke-width="1" fill="none"/>
<path d="M928.0 0.0L1271.0 197.7M584.6 0.0L1271.0 395.7M241.1 0.0L1271.0 593.7M0.0 59.0L1250.7 780.0M0.0 257.0L907.2 780.0M0.0 455.0L563.7 780.0M0.0 653.0L220.3 780.0M0.0 17.0L29.5 0.0M0.0 215.0L372.5 0.0M0.0 413.0L715.5 0.0M0.0 611.0L1058.6 0.0M50.2 780.0L1271.0 75.4M393.3 780.0L1271.0 273.4M736.3 780.0L1271.0 471.4M1079.3 780.0L1271.0 669.4" stroke="#4a5364" stroke-width="1" fill="none"/>
<line x1="0" y1="257.0" x2="477.8" y2="532.5" stroke="#3a803a" stroke-width="1"/>
<line x1="477.8" y1="533.2" x2="1271" y2="75.4" stroke="#8a3540" stroke-width="1"/>
<polygon points="481.7,318.5 549.7,279.8 618.5,318.6 720.8,259.5 720.8,180.8 789.8,142.0 841.2,170.5 841.2,228.5 858.7,238.4 910.2,211.0 960.8,239.9 961.5,458.2 653.5,635.2 601.9,606.7 601.9,546.7 584.7,537.3 533.5,566.6 481.7,536.3" fill="#8a8a8a" stroke="#0c0e12" stroke-width="3.2" stroke-linejoin="miter"/>
<polygon points="720.8,180.8 893.2,279.0 893.2,358.5 720.8,259.5" fill="#8c8c8c" stroke="#f4f4f4" stroke-width="1.05" stroke-linejoin="miter"/>
<polygon points="790.8,200.0 841.2,170.5 841.2,228.5" fill="#8a8a8a" stroke="#f4f4f4" stroke-width="1.05" stroke-linejoin="miter"/>
<polygon points="720.8,180.8 789.8,142.0 841.2,170.5 790.8,200.0 858.7,238.4 910.2,211.0 960.8,239.9 893.2,279.0" fill="#a9a9a9" stroke="#f4f4f4" stroke-width="1.05" stroke-linejoin="miter"/>
<polygon points="618.5,318.6 720.8,259.5 893.2,358.5 721.4,456.8 721.4,417.0 824.1,357.9 721.4,300.1 655.5,339.6" fill="#a9a9a9" stroke="#f4f4f4" stroke-width="1.05" stroke-linejoin="miter"/>
<polygon points="655.5,339.6 721.4,300.1 824.1,357.9 721.4,417.0 721.4,378.8" fill="#8c8c8c" stroke="#f4f4f4" stroke-width="1.05" stroke-linejoin="miter"/>
<polygon points="481.7,318.5 533.5,347.8 533.5,566.6 481.7,536.3" fill="#8c8c8c" stroke="#f4f4f4" stroke-width="1.05" stroke-linejoin="miter"/>
<polygon points="533.5,347.8 584.7,320.1 584.7,537.3 533.5,566.6" fill="#8a8a8a" stroke="#f4f4f4" stroke-width="1.05" stroke-linejoin="miter"/>
<polygon points="584.7,320.1 653.3,358.0 601.9,387.6 601.9,546.7 584.7,537.3" fill="#8c8c8c" stroke="#f4f4f4" stroke-width="1.05" stroke-linejoin="miter"/>
<polygon points="481.7,318.5 549.7,279.8 721.4,378.8 653.5,417.8 601.9,387.6 653.3,358.0 584.7,320.1 533.5,347.8" fill="#a9a9a9" stroke="#f4f4f4" stroke-width="1.05" stroke-linejoin="miter"/>
<polygon points="601.9,387.6 653.5,417.8 653.5,635.2 601.9,606.7" fill="#8c8c8c" stroke="#f4f4f4" stroke-width="1.05" stroke-linejoin="miter"/>
<polygon points="653.5,417.8 721.4,378.8 721.4,456.8 893.2,358.5 893.2,279.0 960.8,239.9 961.5,458.2 653.5,635.2" fill="#8a8a8a" stroke="#f4f4f4" stroke-width="1.05" stroke-linejoin="miter"/>
<polygon points="481.7,318.5 549.7,279.8 618.5,318.6 720.8,259.5 720.8,180.8 789.8,142.0 841.2,170.5 841.2,228.5 858.7,238.4 910.2,211.0 960.8,239.9 961.5,458.2 653.5,635.2 601.9,606.7 601.9,546.7 584.7,537.3 533.5,566.6 481.7,536.3" fill="none" stroke="#ffffff" stroke-width="1.4" stroke-linejoin="miter"/>
</svg>
</div>
<div class="t" style="left:3px;top:177px;font-size:12.2px;color:#e6e6e6;-webkit-text-stroke:0.3px #e6e6e6">[−][ЮЗ изометрия][Оттенки серого]</div>
<div class="a" style="left:1211px;top:185px;width:10px;height:3px;background:#f0f0f0"></div>
<svg class="a" style="left:1230px;top:178px" width="12" height="12" viewBox="0 0 12 12"><path d="M4 2.2 H10.8 V9" fill="none" stroke="#f0f0f0" stroke-width="1"/><rect x="1.8" y="4.3" width="7" height="6.5" fill="#212830" stroke="#f0f0f0" stroke-width="2.2"/></svg>
<svg class="a" style="left:1250px;top:179px" width="11" height="11" viewBox="0 0 11 11"><path d="M1.5 1.5 L9.5 9.5 M9.5 1.5 L1.5 9.5" stroke="#f4f4f4" stroke-width="2.6"/></svg>
<div class="a" style="left:1271px;top:170px;width:8px;height:780px;background:#1c2430"></div>
<div class="a" style="left:1271px;top:170px;width:6px;height:780px;background:linear-gradient(90deg,#a4c4e6,#c0daf2 50%,#b4d0ec)"></div>
<div class="a" style="left:1271px;top:175px;width:6px;height:85px;background:linear-gradient(90deg,#b8d6f0,#dcecfa 50%,#c4def4)"></div>
<svg class="a" style="left:1110px;top:225px" width="160" height="130" viewBox="0 0 160 130">
<defs><radialGradient id="shd" cx=".5" cy=".5" r=".5"><stop offset="0" stop-color="#101318" stop-opacity=".75"/><stop offset=".85" stop-color="#14181e" stop-opacity=".6"/><stop offset="1" stop-color="#1d232b" stop-opacity=".4"/></radialGradient></defs>
<path fill-rule="evenodd" d="M16 75 A63 44 0 1 0 142 75 A63 44 0 1 0 16 75 Z M29 77 A50 31 0 1 1 129 77 A50 31 0 1 1 29 77 Z" fill="#565a62" opacity=".8"/>
<ellipse cx="79" cy="77" rx="50" ry="31" fill="url(#shd)"/>
<polygon points="79,13.5 44.8,29.4 79,48.3 113.8,29.4" fill="#c6c6c8" stroke="#4a4a4a" stroke-width=".7" stroke-dasharray="1.2 .8"/>
<polygon points="44.8,29.4 79,48.3 79,89.2 46,68.5" fill="#bebec0" stroke="#4a4a4a" stroke-width=".7" stroke-dasharray="1.2 .8"/>
<polygon points="79,48.3 113.8,29.4 112,67.3 79,89.2" fill="#b8b8ba" stroke="#4a4a4a" stroke-width=".7" stroke-dasharray="1.2 .8"/>
<path d="M79 48.3 V89.2" stroke="#555" stroke-width=".8"/>
<text transform="matrix(0.95,-0.32,0.8,0.62,80,32.5)" font-family="Liberation Sans" font-size="9.5" fill="#333" stroke="#333" stroke-width=".25" text-anchor="middle">Верх</text>
<text transform="matrix(0.78,0.45,0,1,62,66)" font-family="Liberation Sans" font-size="11" fill="#3c3c3c" text-anchor="middle">Слева</text>
<text transform="matrix(0.8,-0.46,0,1,95.5,68)" font-family="Liberation Sans" font-size="11" fill="#3c3c3c" text-anchor="middle">Спереди</text>
<text transform="translate(42,53) rotate(-30)" font-family="Liberation Sans" font-size="14" fill="#d0d2d6" text-anchor="middle">С</text>
<text transform="translate(119,52) rotate(35)" font-family="Liberation Sans" font-size="13" fill="#d0d2d6" text-anchor="middle">В</text>
<text transform="translate(37,104) rotate(-58)" font-family="Liberation Sans" font-size="15" fill="#d0d2d6" text-anchor="middle">З</text>
<text transform="translate(128,103) rotate(-60)" font-family="Liberation Sans" font-size="15" fill="#d0d2d6" text-anchor="middle">Ю</text>
</svg>
<div class="a" style="left:1151px;top:362px;width:75px;height:18px;background:#8a8d98;border:1px solid #9a9daa;border-radius:4px;box-shadow:0 0 1px #222"></div>
<div class="t" style="left:1156px;top:365.5px;font-size:9.8px;color:#42444c;">Без имени</div>
<svg class="a" style="left:1212px;top:368px" width="9" height="6" viewBox="0 0 9 6"><polygon points="0.5,0.5 8.5,0.5 4.5,5.5" fill="#a8abb4" stroke="#6a6d76" stroke-width=".7"/></svg>
<div class="a" style="left:1236px;top:405px;width:32px;height:212px;background:rgba(98,102,110,.82);border:1px solid rgba(120,124,132,.7);border-radius:5px"></div>
<svg class="a" style="left:1236px;top:405px" width="32" height="212" viewBox="0 0 32 212"><circle cx="25" cy="5.5" r="3" fill="none" stroke="#464a52" stroke-width="1"/><path d="M23.5 4 L26.5 7 M26.5 4 L23.5 7" stroke="#464a52" stroke-width=".9"/>
<path d="M15.8 19.5 A10.5 10.5 0 1 0 26.3 30 V22.5 Q26.3 19.5 23.3 19.5 Z" fill="none" stroke="#464a52" stroke-width="1.2"/><circle cx="15.8" cy="30" r="5.6" fill="none" stroke="#464a52" stroke-width="1.2"/><path d="M11.8 34 L8.4 37.4 M19.8 34 L23.2 37.4" stroke="#464a52" stroke-width="1.2"/>
<polygon points="14,50 18.4,50 16.2,53" fill="#464a52"/>
<path d="M8 78 Q5 73 6 71.5 Q8 70.5 10 73.5 V65 Q10 63.5 11.8 63.5 Q13.5 63.5 13.5 65 V71 V62.5 Q13.5 61 15.5 61 Q17.3 61 17.3 62.5 V71 V63 Q17.3 61.5 19.2 61.5 Q21 61.5 21 63 V71.5 V65.5 Q21 64 22.8 64 Q24.5 64 24.5 65.5 V75 Q24.5 83 18.5 84.5 H14 Q10 84 8 78 Z" fill="none" stroke="#464a52" stroke-width="1.1"/>
<path d="M5 90 L15 100 M27 90 L7 110 M5 90 H10 M5 90 V95 M27 90 H22 M27 90 V95 M7 110 V105 M7 110 H12" fill="none" stroke="#464a52" stroke-width="1.1"/><circle cx="21" cy="106" r="4.5" fill="none" stroke="#464a52" stroke-width="1.1"/><path d="M24 109 L28 113" stroke="#464a52" stroke-width="2"/>
<polygon points="14,119 18.4,119 16.2,122" fill="#464a52"/>
<path d="M16.2 128 V150 M13 132 L16.2 128 L19.4 132 M13.5 138 V150 H19 V138" fill="none" stroke="#464a52" stroke-width="1.1"/><ellipse cx="16.2" cy="142" rx="10" ry="4" fill="none" stroke="#464a52" stroke-width="1.1"/>
<polygon points="14,157 18.4,157 16.2,160" fill="#464a52"/>
<path d="M8 170 H13 V175 H8 Z M14 170 H19 V175 H14 Z M20 170 H25 V175 H20 Z M8 177 H25 V192 H8 Z" fill="none" stroke="#464a52" stroke-width="1"/><polygon points="13,180 21,184.5 13,189" fill="#464a52"/>
<circle cx="25" cy="205" r="3" fill="none" stroke="#464a52" stroke-width="1"/><path d="M23 205 H27" stroke="#464a52" stroke-width="1"/></svg>
<svg class="a" style="left:430px;top:640px" width="100" height="80" viewBox="0 0 100 80">
<path d="M47.8 64 L14 45" stroke="#1f7a1f" stroke-width="4.2" stroke-linecap="round"/>
<path d="M47.8 63 L14 44" stroke="#4fc04f" stroke-width="2" stroke-linecap="round"/>
<path d="M49 64 L82 45" stroke="#8a1f1f" stroke-width="4.2" stroke-linecap="round"/>
<path d="M49 63 L82 44" stroke="#d04848" stroke-width="1.8" stroke-linecap="round"/>
<path d="M47.8 64 V22.5" stroke="#12307a" stroke-width="6"/>
<path d="M47.3 63 V24" stroke="#2654b0" stroke-width="2.4"/>
<path d="M10.5 26 L17 32.5 L23.5 26 M17 32.5 V38.7" stroke="#3aa03a" stroke-width="1" fill="none"/>
<path d="M47 7 H59 L47 19 H59" stroke="#3a6ad0" stroke-width="1" fill="none"/>
<path d="M80 26 L93 39 M93 26 L80 39" stroke="#c84040" stroke-width="1" fill="none"/>
</svg>
<svg class="a" style="left:310px;top:870px" width="80" height="70" viewBox="0 0 80 70">
<path d="M38.5 3 V61.5" stroke="#8a8ae6" stroke-width="1.1"/>
<path d="M5 23 L38.5 42.5 L55.5 51.5" stroke="#90e890" stroke-width="1.1"/>
<path d="M72 23 L38.5 42.5 L22 51.5" stroke="#e8a4a4" stroke-width="1.1"/>
<rect x="34.8" y="38.8" width="7.4" height="7.4" fill="#212830" stroke="#ffffff" stroke-width="1.3"/>
</svg>
<div class="a" style="left:0;top:950px;width:1279px;height:29px;background:#3c3c3c;border-top:1px solid #4e4e4e"></div>
<div class="a" style="left:0;top:979px;width:1279px;height:4px;background:linear-gradient(90deg,#0e1a30,#1a2c4c 30%,#142440 60%,#1e3050)"></div>
<div class="a" style="left:245px;top:980px;width:56px;height:3px;background:linear-gradient(#c8ccd4,#9aa0aa);border-radius:2px 2px 0 0"></div>
<div class="a" style="left:430px;top:980px;width:57px;height:3px;background:linear-gradient(#c8ccd4,#9aa0aa);border-radius:2px 2px 0 0"></div>
<div class="a" style="left:491px;top:980px;width:59px;height:3px;background:linear-gradient(#c8ccd4,#9aa0aa);border-radius:2px 2px 0 0"></div>
<div class="a" style="left:553px;top:980px;width:59px;height:3px;background:linear-gradient(#c8ccd4,#9aa0aa);border-radius:2px 2px 0 0"></div>
<div class="a" style="left:616px;top:980px;width:56px;height:3px;background:linear-gradient(#c8ccd4,#9aa0aa);border-radius:2px 2px 0 0"></div>
<div class="a" style="left:676px;top:980px;width:59px;height:3px;background:linear-gradient(#c8ccd4,#9aa0aa);border-radius:2px 2px 0 0"></div>
<div class="a" style="left:742px;top:980px;width:56px;height:3px;background:linear-gradient(#c8ccd4,#9aa0aa);border-radius:2px 2px 0 0"></div>
<div class="a" style="left:1266px;top:980px;width:13px;height:3px;background:linear-gradient(#c8ccd4,#9aa0aa);border-radius:2px 2px 0 0"></div>
<svg class="a" style="left:0;top:950px" width="220" height="22">
<defs><linearGradient id="lt" x1="0" y1="0" x2="0" y2="1"><stop offset="0" stop-color="#7a7a7a"/><stop offset="1" stop-color="#5a5a5a"/></linearGradient></defs>
<path d="M11 0 H78 Q74 4 73 12 Q71 18 64 18 H20 Q15 18 14 12 Q13 4 11 0 Z" fill="url(#lt)"/>
<path d="M78 0 H130 Q127 4 126 12 Q124 18 118 18 H88 Q83 18 82 12 Q81 4 78 0 Z" fill="#525252"/>
<path d="M132 0 H187 Q184 4 183 12 Q181 18 175 18 H142 Q137 18 136 12 Q135 4 132 0 Z" fill="#525252"/>
<path d="M190 0 H210 Q208 4 207 10 Q205 15 200 15 H193 Q188 15 188 10 Q188 4 190 0 Z" fill="#525252"/>
</svg>
<div class="t" style="left:22px;top:953px;font-size:11.6px;color:#f4f4f4;"><b>Модель</b></div>
<div class="t" style="left:89px;top:953px;font-size:11.6px;color:#c8c8c8;">Лист1</div>
<div class="t" style="left:142px;top:953px;font-size:11.6px;color:#c8c8c8;">Лист2</div>
<svg class="a" style="left:193px;top:953px" width="10" height="10" viewBox="0 0 10 10"><path d="M5 1 V9 M1 5 H9" stroke="#e0e0e0" stroke-width="2"/></svg>
<div class="a" style="left:676px;top:951px;width:59px;height:26px;border:1.5px solid #6c6c6c;background:#4b4b4b"></div>
<div class="a" style="left:735px;top:951px;width:66px;height:26px;border:1.5px solid #6c6c6c;background:#4b4b4b"></div>
<div class="a" style="left:801px;top:951px;width:104px;height:26px;border:1.5px solid #6c6c6c;background:#4b4b4b"></div>
<div class="a" style="left:905px;top:951px;width:64px;height:26px;border:1.5px solid #6c6c6c;background:#4b4b4b"></div>
<div class="a" style="left:969px;top:951px;width:26px;height:26px;border:1.5px solid #6c6c6c;background:#4b4b4b"></div>
<div class="a" style="left:995px;top:951px;width:113px;height:26px;border:1.5px solid #6c6c6c;background:#4b4b4b"></div>
<div class="a" style="left:1108px;top:951px;width:40px;height:26px;border:1.5px solid #6c6c6c;background:#4b4b4b"></div>
<div class="a" style="left:1147px;top:951px;width:27px;height:26px;border:1.5px solid #6c6c6c;background:#4b4b4b"></div>
<div class="a" style="left:1173px;top:951px;width:28px;height:26px;border:1.5px solid #6c6c6c;background:#4b4b4b"></div>
<div class="a" style="left:1200px;top:951px;width:28px;height:26px;border:1.5px solid #6c6c6c;background:#4b4b4b"></div>
<div class="a" style="left:1228px;top:951px;width:49px;height:26px;border:1.5px solid #6c6c6c;background:#4b4b4b"></div>
<div class="t" style="left:680px;top:958px;font-size:11.9px;color:#f4f4f4;letter-spacing:-0.2px">МОДЕЛЬ</div>
<svg class="a" style="left:739px;top:955px" width="17" height="17" viewBox="0 0 17 17"><path d="M2 1 V16 M5 1 V16 M8 1 V16 M11 1 V16 M14 1 V16 M1 3.5 H16 M1 7 H16 M1 10.5 H16 M1 14 H16" stroke="#3a8ef0" stroke-width="1.2"/></svg>
<svg class="a" style="left:764px;top:955px" width="15" height="17" viewBox="0 0 15 17"><rect x="0" y="1" width="1.3" height="1.3" fill="#d8d8d8"/><rect x="0" y="4" width="1.3" height="1.3" fill="#d8d8d8"/><rect x="0" y="7" width="1.3" height="1.3" fill="#d8d8d8"/><rect x="0" y="10" width="1.3" height="1.3" fill="#d8d8d8"/><rect x="0" y="13" width="1.3" height="1.3" fill="#d8d8d8"/><rect x="0" y="16" width="1.3" height="1.3" fill="#d8d8d8"/><rect x="3" y="1" width="1.3" height="1.3" fill="#d8d8d8"/><rect x="3" y="4" width="1.3" height="1.3" fill="#d8d8d8"/><rect x="3" y="7" width="1.3" height="1.3" fill="#d8d8d8"/><rect x="3" y="10" width="1.3" height="1.3" fill="#d8d8d8"/><rect x="3" y="13" width="1.3" height="1.3" fill="#d8d8d8"/><rect x="3" y="16" width="1.3" height="1.3" fill="#d8d8d8"/><rect x="6" y="1" width="1.3" height="1.3" fill="#d8d8d8"/><rect x="6" y="4" width="1.3" height="1.3" fill="#d8d8d8"/><rect x="6" y="7" width="1.3" height="1.3" fill="#d8d8d8"/><rect x="6" y="10" width="1.3" height="1.3" fill="#d8d8d8"/><rect x="6" y="13" width="1.3" height="1.3" fill="#d8d8d8"/><rect x="6" y="16" width="1.3" height="1.3" fill="#d8d8d8"/><rect x="9" y="1" width="1.3" height="1.3" fill="#d8d8d8"/><rect x="9" y="4" width="1.3" height="1.3" fill="#d8d8d8"/><rect x="9" y="7" width="1.3" height="1.3" fill="#d8d8d8"/><rect x="9" y="10" width="1.3" height="1.3" fill="#d8d8d8"/><rect x="9" y="13" width="1.3" height="1.3" fill="#d8d8d8"/><rect x="9" y="16" width="1.3" height="1.3" fill="#d8d8d8"/><rect x="12" y="1" width="1.3" height="1.3" fill="#d8d8d8"/><rect x="12" y="4" width="1.3" height="1.3" fill="#d8d8d8"/><rect x="12" y="7" width="1.3" height="1.3" fill="#d8d8d8"/><rect x="12" y="10" width="1.3" height="1.3" fill="#d8d8d8"/><rect x="12" y="13" width="1.3" height="1.3" fill="#d8d8d8"/><rect x="12" y="16" width="1.3" height="1.3" fill="#d8d8d8"/></svg>
<svg class="a" style="left:789px;top:962px" width="7" height="4"><polygon points="0,0 7,0 3.5,4" fill="#f0f0f0"/></svg>
<svg class="a" style="left:806px;top:954px" width="16" height="18" viewBox="0 0 16 18"><path d="M2 1 V16 H15 M2 11 H7 V16" stroke="#3a8ef0" stroke-width="1.4" fill="none"/></svg>
<svg class="a" style="left:830px;top:954px" width="17" height="18" viewBox="0 0 17 18"><circle cx="7.5" cy="10" r="6.5" fill="none" stroke="#d8d8d8" stroke-width="1.3"/><path d="M7.5 10 L14 3 M7.5 10 H16" stroke="#d8d8d8" stroke-width="1.3"/></svg>
<svg class="a" style="left:855px;top:962px" width="7" height="4"><polygon points="0,0 7,0 3.5,4" fill="#f0f0f0"/></svg>
<svg class="a" style="left:868px;top:953px" width="19" height="20" viewBox="0 0 19 20"><path d="M2 1 L17 19 M10 1 V19" stroke="#c8c8c8" stroke-width="1.3"/><circle cx="10" cy="10.5" r="1.6" fill="none" stroke="#c8c8c8"/></svg>
<svg class="a" style="left:893px;top:962px" width="7" height="4"><polygon points="0,0 7,0 3.5,4" fill="#f0f0f0"/></svg>
<svg class="a" style="left:908px;top:954px" width="19" height="18" viewBox="0 0 19 18"><path d="M1 16.5 H17 M1.5 16 L14 5" stroke="#3a8ef0" stroke-width="1.4"/><rect x="6" y="8.5" width="3" height="3" fill="#3a8ef0"/></svg>
<svg class="a" style="left:933px;top:953px" width="18" height="20" viewBox="0 0 18 20"><rect x="3.5" y="4.5" width="13" height="14" fill="none" stroke="#3a8ef0" stroke-width="1.4"/><rect x="0.5" y="0.5" width="5" height="5" fill="#111"/><rect x="1.5" y="1.5" width="3" height="3" fill="#3ae03a"/></svg>
<svg class="a" style="left:957px;top:962px" width="7" height="4"><polygon points="0,0 7,0 3.5,4" fill="#f0f0f0"/></svg>
<svg class="a" style="left:973px;top:954px" width="17" height="18" viewBox="0 0 17 18"><path d="M0 3 H17 M0 8 H11 M0 13 H17" stroke="#e0e0e0" stroke-width="2.4"/><path d="M0 8 H17" stroke="#e0e0e0" stroke-width="2.4" stroke-dasharray="11 6"/></svg>
<svg class="a" style="left:998px;top:953px" width="20" height="20" viewBox="0 0 20 20"><path transform="translate(1.5 2.5)" d="M8 0 Q10.5 7 11 10 Q13.5 13.5 16.5 17 Q11.5 16.5 8 14.8 Q4.5 16.5 -0.5 17 Q2.5 13.5 5 10 Q5.5 7 8 0 Z" fill="#3a8ef0"/><circle cx="14" cy="7" r="3.2" fill="#2a6ad0" stroke="#8ec0ff" stroke-width="1"/></svg>
<svg class="a" style="left:1022px;top:953px" width="20" height="20" viewBox="0 0 20 20"><path transform="translate(2 2)" d="M8 0 Q10.5 7 11 10 Q13.5 13.5 16.5 17 Q11.5 16.5 8 14.8 Q4.5 16.5 -0.5 17 Q2.5 13.5 5 10 Q5.5 7 8 0 Z" fill="#c4c4c4"/><path d="M15 2 L12 7.5 H15.5 L12.5 13" stroke="#4b4b4b" stroke-width="2.6" fill="none"/><path d="M15 2 L12 7.5 H15.5 L12.5 13" stroke="#c4c4c4" stroke-width="1.3" fill="none"/></svg>
<svg class="a" style="left:1047px;top:953px" width="20" height="20" viewBox="0 0 20 20"><path transform="translate(1.5 2)" d="M8 0 Q10.5 7 11 10 Q13.5 13.5 16.5 17 Q11.5 16.5 8 14.8 Q4.5 16.5 -0.5 17 Q2.5 13.5 5 10 Q5.5 7 8 0 Z" fill="#c4c4c4"/></svg>
<div class="t" style="left:1073px;top:958px;font-size:12.5px;color:#f0f0f0;">1:1</div>
<svg class="a" style="left:1094px;top:962px" width="7" height="4"><polygon points="0,0 7,0 3.5,4" fill="#f0f0f0"/></svg>
<svg class="a" style="left:1113px;top:955px" width="15" height="15" viewBox="0 0 15 15"><circle cx="7.5" cy="7.5" r="5" fill="#bdbdbd"/><circle cx="7.5" cy="7.5" r="2" fill="#4b4b4b"/><rect x="6.2" y="0.3" width="2.6" height="3.5" fill="#bdbdbd" transform="rotate(0 7.5 7.5)"/><rect x="6.2" y="0.3" width="2.6" height="3.5" fill="#bdbdbd" transform="rotate(45 7.5 7.5)"/><rect x="6.2" y="0.3" width="2.6" height="3.5" fill="#bdbdbd" transform="rotate(90 7.5 7.5)"/><rect x="6.2" y="0.3" width="2.6" height="3.5" fill="#bdbdbd" transform="rotate(135 7.5 7.5)"/><rect x="6.2" y="0.3" width="2.6" height="3.5" fill="#bdbdbd" transform="rotate(180 7.5 7.5)"/><rect x="6.2" y="0.3" width="2.6" height="3.5" fill="#bdbdbd" transform="rotate(225 7.5 7.5)"/><rect x="6.2" y="0.3" width="2.6" height="3.5" fill="#bdbdbd" transform="rotate(270 7.5 7.5)"/><rect x="6.2" y="0.3" width="2.6" height="3.5" fill="#bdbdbd" transform="rotate(315 7.5 7.5)"/></svg>
<svg class="a" style="left:1136px;top:962px" width="7" height="4"><polygon points="0,0 7,0 3.5,4" fill="#f0f0f0"/></svg>
<svg class="a" style="left:1152px;top:954px" width="16" height="17" viewBox="0 0 16 17"><path d="M8 1 V16 M0.5 8.5 H15.5" stroke="#dcdcdc" stroke-width="2"/></svg>
<svg class="a" style="left:1178px;top:953px" width="17" height="19" viewBox="0 0 17 19"><rect x="1" y="1" width="6.5" height="6.5" fill="none" stroke="#dcdcdc" stroke-width="1.1"/><circle cx="12.5" cy="7" r="3.5" fill="none" stroke="#3a8ef0" stroke-width="1.6"/><path d="M6 10.5 L10 17.5 H2 Z" fill="none" stroke="#dcdcdc" stroke-width="1.1"/></svg>
<svg class="a" style="left:1205px;top:954px" width="18" height="18" viewBox="0 0 18 18"><circle cx="9" cy="9" r="7.8" fill="none" stroke="#b8b8b8" stroke-width="1.2"/><path d="M5.5 6.5 L10 10.5" stroke="#b8b8b8" stroke-width="1.6"/></svg>
<svg class="a" style="left:1233px;top:955px" width="17" height="15" viewBox="0 0 17 15"><rect x="1" y="1" width="15" height="13" fill="none" stroke="#dcdcdc" stroke-width="1.4"/><path d="M4 11 L7.5 7.5 M4 11 V8 M4 11 H7 M9.5 6.5 L13 3 M13 3 H10 M13 3 V6" stroke="#dcdcdc" stroke-width="1.3" fill="none"/></svg>
<svg class="a" style="left:1257px;top:955px" width="17" height="16" viewBox="0 0 17 16"><path d="M0 2 H16 M0 7.5 H16 M0 13 H16" stroke="#e0e0e0" stroke-width="2.2"/></svg>
</body></html>
